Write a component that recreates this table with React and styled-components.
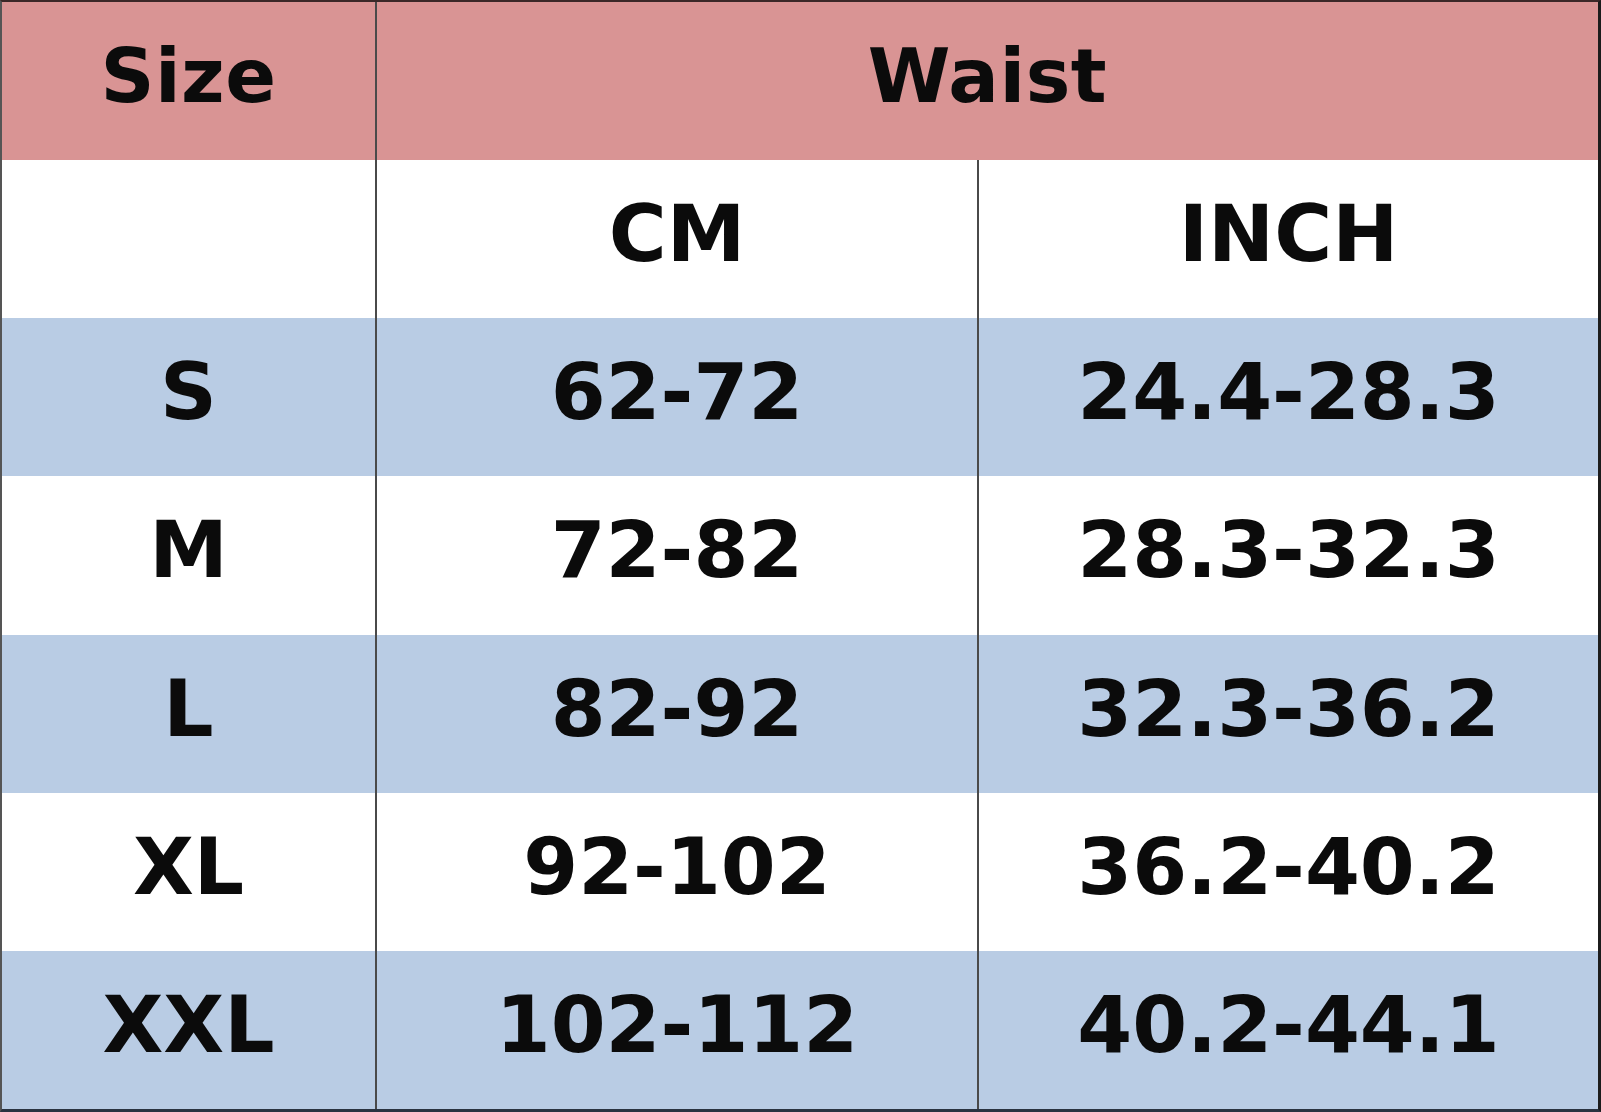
import React from 'react';
import styled, { createGlobalStyle } from 'styled-components';

const GlobalStyle = createGlobalStyle`
  html, body {
    margin: 0;
    padding: 0;
    background: #ffffff;
  }
  * { box-sizing: border-box; }
`;

const rows = [
  { size: 'S', cm: '62-72', inch: '24.4-28.3' },
  { size: 'M', cm: '72-82', inch: '28.3-32.3' },
  { size: 'L', cm: '82-92', inch: '32.3-36.2' },
  { size: 'XL', cm: '92-102', inch: '36.2-40.2' },
  { size: 'XXL', cm: '102-112', inch: '40.2-44.1' },
];

const Chart = styled.div`
  width: 1601px;
  height: 1112px;
  display: grid;
  grid-template-columns: 373px 602px 1fr;
  grid-template-rows: repeat(7, 1fr);
  border-top: 2px solid #3b2828;
  border-right: 3px solid #1c1c1c;
  border-bottom: 3px solid #2a3340;
  border-left: 2px solid #555;
  font-family: 'DejaVu Sans', Verdana, sans-serif;
  font-weight: 700;
  color: #0b0b0b;
`;

const Cell = styled.div`
  display: flex;
  align-items: center;
  justify-content: center;
  padding-bottom: 10px;
  font-size: ${(p) => (p.$head ? '75px' : '79px')};
  letter-spacing: ${(p) => (p.$head ? '0.5px' : '0')};
  background: ${(p) =>
    p.$tone === 'pink' ? '#d99494' : p.$tone === 'blue' ? '#b9cce4' : '#ffffff'};
  border-left: ${(p) => (p.$divider ? '2px solid #4a4a4a' : 'none')};
  grid-column: ${(p) => p.$span || 'auto'};
  white-space: nowrap;
`;

export default function App() {
  return (
    <>
      <GlobalStyle />
      <Chart>
        <Cell $head $tone="pink">Size</Cell>
        <Cell $head $tone="pink" $divider $span="span 2">Waist</Cell>

        <Cell />
        <Cell $divider>CM</Cell>
        <Cell $divider>INCH</Cell>

        {rows.map((r, i) => {
          const tone = i % 2 === 0 ? 'blue' : 'white';
          return (
            <React.Fragment key={r.size}>
              <Cell $tone={tone}>{r.size}</Cell>
              <Cell $tone={tone} $divider>{r.cm}</Cell>
              <Cell $tone={tone} $divider>{r.inch}</Cell>
            </React.Fragment>
          );
        })}
      </Chart>
    </>
  );
}
